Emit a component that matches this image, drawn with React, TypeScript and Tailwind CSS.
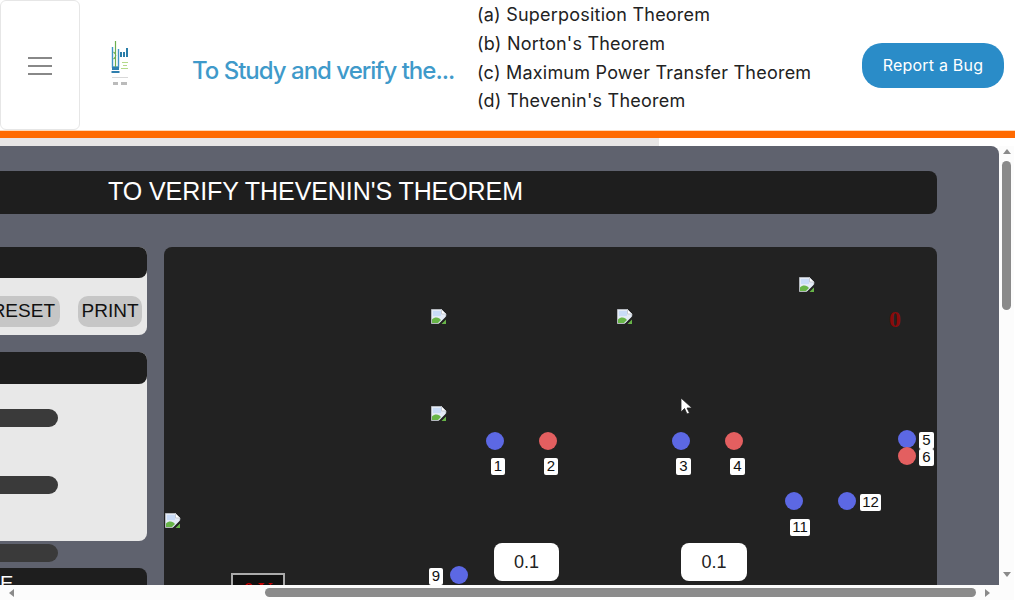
import React from 'react';

const BrokenImage = ({ className }: { className: string }) => (
  <svg className={className} width="16" height="16" viewBox="0 0 16 16">
    <path d="M0.500 0.500h10l4.500 4.500v9.500H0.500z" fill="#e4ebf6" stroke="#b4b8be" strokeWidth="1" />
    <path d="M10.500 0.500v4.500h4.500z" fill="#fff" stroke="#c8ccd2" strokeWidth="1" />
    <path d="M2 2h8v5H2z" fill="#c9dcf8" />
    <path d="M1 14V10.500c2.500-2.500 5-2.500 7.500-1L10 11l-3 3z" fill="#68b548" />
    <path d="M11 14.500h4V10z" fill="#4f9a38" />
    <path d="M7 15.500l8.500-8.500v-1.500H16V16H7z" fill="#222" />
    <path d="M10.500 15h4.500v-4.500z" fill="#68b548" />
  </svg>
);

const Logo = () => (
  <svg width="18" height="48" viewBox="0 0 18 48" className="blur-[0.4px]">
    <path d="M1.500 6v20h6V8" stroke="#3f93c4" strokeWidth="1.400" fill="none" />
    <path d="M4.500 0v26M2.500 11c3 2 3 5 0 7" stroke="#6cae4f" strokeWidth="1.200" fill="none" />
    <rect x="1" y="26" width="7" height="3" fill="#2f7fae" />
    <rect x="0.500" y="30" width="8" height="2" fill="#2f7fae" />
    <rect x="9" y="11" width="2" height="5" fill="#2a7da8" />
    <rect x="12" y="11" width="2" height="5" fill="#2a7da8" />
    <rect x="15" y="7" width="2" height="9" fill="#2a7da8" />
    <rect x="11" y="21" width="6" height="1" fill="#b4d98a" />
    <rect x="12" y="24" width="4" height="1" fill="#b4d98a" />
    <rect x="10" y="27" width="7" height="1" fill="#b4d98a" />
    <rect x="1" y="36" width="16" height="1" fill="#d8d8d8" />
    <rect x="2" y="41" width="5" height="3" fill="#bbb" />
    <rect x="10" y="41" width="6" height="3" fill="#bbb" />
  </svg>
);

const Pill = () => <div className="h-[18px] w-[120px] rounded-full bg-[#3a3a3a]" />;

const Terminal = ({ className, red }: { className: string; red?: boolean }) => (
  <div className={`absolute h-[18px] w-[18px] rounded-full ${red ? 'bg-[#e35f60]' : 'bg-[#5c68e4]'} ${className}`} />
);

const Tag = ({ className, children }: { className: string; children: React.ReactNode }) => (
  <div className={`absolute flex h-[17px] items-center justify-center rounded-[2px] bg-white text-[15px] text-[#111] ${className}`}>
    {children}
  </div>
);

const App = () => {
  return (
    <div className="relative flex h-[600px] w-full flex-col overflow-hidden bg-white font-['Liberation_Sans',sans-serif]">
      {/* Header */}
      <header className="flex h-[130px] w-[1015px] shrink-0 items-center font-['Inter',sans-serif]">
        <button className="flex h-[130px] w-[80px] flex-col items-center justify-center gap-[6px] rounded-md border border-[#e6e6e6] pt-px">
          <span className="h-0.5 w-6 bg-[#888]" />
          <span className="h-0.5 w-6 bg-[#888]" />
          <span className="h-0.5 w-6 bg-[#888]" />
        </button>
        <div className="ml-[31px] mr-[63px] flex w-[18px] items-center">
          <Logo />
        </div>
        <h1 className="mt-[11px] w-[285px] text-[24px] font-medium tracking-[-1px] whitespace-nowrap text-[#3f9aca]">
          To Study and verify the...
        </h1>
        <ul className="w-[385px] pb-[13px] text-[18px] leading-[28.8px] tracking-[0.22px] whitespace-nowrap text-[#222]">
          <li>(a) Superposition Theorem</li>
          <li>(b) Norton's Theorem</li>
          <li>(c) Maximum Power Transfer Theorem</li>
          <li>(d) Thevenin's Theorem</li>
        </ul>
        <button className="h-[45px] w-[142px] rounded-[20px] bg-[#2a8cc8] text-[16px] tracking-[0.2px] text-white">Report a Bug</button>
      </header>
      <div className="h-[8px] w-[1015px] shrink-0 border-t border-[#ffd9b8] bg-[#ff6a00]" />
      <div className="h-[8px] w-[659px] shrink-0 bg-[#e8e6e6]" />

      {/* Scrolling stage */}
      <div className="grid min-h-0 flex-1 grid-cols-[999px_15px] grid-rows-[439px_15px]">
        <main className="flex flex-col overflow-hidden rounded-tr-lg bg-[#5f626e]">
          <div className="mt-[25px] flex h-[43px] w-[937px] shrink-0 items-center rounded-r-lg bg-[#1e1e1e] pb-px pl-[108px] text-[25px] tracking-[-0.07px] whitespace-nowrap text-white">
            TO VERIFY THEVENIN'S THEOREM
          </div>
          <div className="mt-[33px] flex w-[937px] gap-[17px]">
            {/* Left controls, scrolled partly out of view */}
            <aside className="flex w-[147px] shrink-0 flex-col">
              <section className="h-[88px] rounded-r-lg bg-[#e8e8e8]">
                <div className="h-[31px] rounded-r-lg bg-[#1e1e1e]" />
                <div className="mt-[18px] flex justify-end gap-[18px] overflow-hidden pr-[5px] text-[19px] text-[#111]">
                  <button className="h-[31px] shrink-0 rounded-[10px] bg-[#c6c6c6] pr-[5px] pl-[5px]">RESET</button>
                  <button className="h-[31px] w-[64px] shrink-0 rounded-[10px] bg-[#c6c6c6]">PRINT</button>
                </div>
              </section>
              <section className="mt-[17px] flex h-[189px] flex-col items-end rounded-r-lg bg-[#e8e8e8]">
                <div className="h-[32px] w-full rounded-r-lg bg-[#1e1e1e]" />
                <div className="mt-[25px] mr-[89px] flex flex-col gap-[49px]">
                  <Pill />
                  <Pill />
                </div>
              </section>
              <div className="mt-[3px] mr-[89px] self-end">
                <Pill />
              </div>
              <div className="mt-[6px] h-[60px] rounded-r-lg bg-[#1e1e1e] text-[20px] text-white">E</div>
            </aside>

            {/* Circuit canvas */}
            <section className="relative h-[500px] w-[773px] shrink-0 rounded-t-lg bg-[#222]">
              <BrokenImage className="absolute top-[62px] left-[267px]" />
              <BrokenImage className="absolute top-[62px] left-[453px]" />
              <BrokenImage className="absolute top-[30px] left-[635px]" />
              <BrokenImage className="absolute top-[159px] left-[267px]" />
              <BrokenImage className="absolute top-[266px] left-[1px]" />

              <div className="absolute top-[54px] left-[725px] font-['Liberation_Serif',serif] text-[24px] font-bold text-[#8a0b0b]">0</div>

              <Terminal className="top-[185px] left-[322px]" />
              <Terminal red className="top-[185px] left-[375px]" />
              <Terminal className="top-[185px] left-[508px]" />
              <Terminal red className="top-[185px] left-[561px]" />
              <Terminal className="top-[183px] left-[734px]" />
              <Terminal red className="top-[200px] left-[734px]" />
              <Terminal className="top-[245px] left-[621px]" />
              <Terminal className="top-[245px] left-[674px]" />
              <Terminal className="top-[319px] left-[286px]" />

              <Tag className="top-[211px] left-[327px] w-[14px]">1</Tag>
              <Tag className="top-[211px] left-[380px] w-[14px]">2</Tag>
              <Tag className="top-[211px] left-[512px] w-[15px]">3</Tag>
              <Tag className="top-[211px] left-[566px] w-[15px]">4</Tag>
              <Tag className="top-[185px] left-[755px] w-[15px]">5</Tag>
              <Tag className="top-[202px] left-[755px] w-[15px]">6</Tag>
              <Tag className="top-[247px] left-[696px] w-[21px]">12</Tag>
              <Tag className="top-[272px] left-[626px] w-[20px]">11</Tag>
              <Tag className="top-[321px] left-[265px] w-[14px]">9</Tag>

              <div className="absolute top-[296px] left-[330px] flex h-[38px] w-[65px] items-center justify-center rounded-lg bg-white text-[18px] text-[#222]">0.1</div>
              <div className="absolute top-[296px] left-[517px] flex h-[38px] w-[66px] items-center justify-center rounded-lg bg-white text-[18px] text-[#222]">0.1</div>

              <div className="absolute top-[326px] left-[67px] h-[60px] w-[54px] border-2 border-[#aaa] bg-[#111] text-center font-['Liberation_Serif',serif] text-[20px] font-bold text-[#c40000]">
                0 V
              </div>

              {/* Mouse pointer */}
              <svg className="absolute top-[150px] left-[516px]" width="13" height="18" viewBox="0 0 13 18">
                <path d="M1 1v14l3.500-3.500 2.500 5.500 2.500-1-2.500-5h5z" fill="#fff" stroke="#222" strokeWidth="0.8" />
              </svg>
            </section>
          </div>
        </main>

        {/* Vertical scrollbar */}
        <div className="flex flex-col items-center bg-[#fcfcfc] pt-[3px]">
          <div className="h-0 w-0 border-x-[4px] border-b-[5px] border-x-transparent border-b-[#8a8a8a]" />
          <div className="mt-[7px] h-[149px] w-[9px] rounded-full bg-[#8a8a8a]" />
          <div className="mt-auto mb-[8px] h-0 w-0 border-x-[4px] border-t-[5px] border-x-transparent border-t-[#8a8a8a]" />
        </div>

        {/* Horizontal scrollbar */}
        <div className="flex items-center bg-[#fcfcfc] pr-[9px] pl-[9px]">
          <div className="h-0 w-0 border-y-[4px] border-r-[5px] border-y-transparent border-r-[#8a8a8a]" />
          <div className="ml-[251px] h-[9px] w-[711px] rounded-full bg-[#8a8a8a]" />
          <div className="ml-auto h-0 w-0 border-y-[4px] border-l-[5px] border-y-transparent border-l-[#8a8a8a]" />
        </div>
        <div className="bg-[#fcfcfc]" />
      </div>
    </div>
  );
};

export default App;
